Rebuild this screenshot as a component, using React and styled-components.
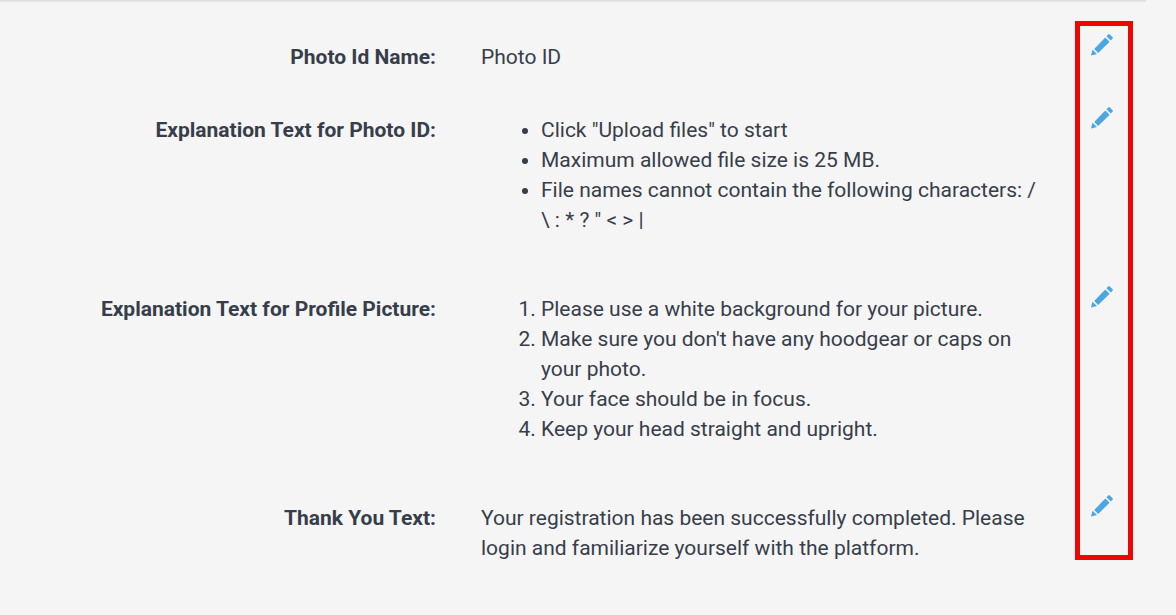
import React from 'react';
import styled, { createGlobalStyle } from 'styled-components';

const GlobalStyle = createGlobalStyle`
  body {
    margin: 0;
    background: #f5f5f5;
    color: #373e4a;
    font-family: Roboto, 'Liberation Sans', sans-serif;
    font-size: 21px;
    line-height: 30px;
  }
`;

const Page = styled.main`
  padding-right: 30px;
`;

const Divider = styled.div`
  height: 1px;
  background: #dcdcdc;
  box-shadow: 0 1px 1px #e8e8e8;
`;

const Settings = styled.div`
  position: relative;
  padding-top: 26px;
`;

const Row = styled.div`
  display: grid;
  grid-template-columns: 436fr 609fr 101px;
  padding-bottom: 28px;
`;

const Label = styled.div`
  padding-top: 15px;
  font-weight: 700;
  text-align: right;
`;

const Value = styled.div`
  padding: 15px 0 0 45px;

  p {
    margin: 0;
  }

  ul,
  ol {
    margin: 0 0 16px;
    padding-left: 60px;
  }
`;

const EditButton = styled.button`
  justify-self: start;
  align-self: start;
  display: flex;
  margin-left: 39px;
  padding: 7px;
  border: none;
  background: none;
  color: #4ba6e2;
  cursor: pointer;
`;

const Highlight = styled.div`
  position: absolute;
  top: 20px;
  right: 13px;
  bottom: 31px;
  width: 48px;
  border: 5px solid #ec0606;
  pointer-events: none;
`;

const Pencil = () => (
  <svg width="22" height="22" viewBox="0 0 22 22" fill="currentColor" aria-hidden="true">
    <path d="M0 21.5L1.4 15.8l4.6 4.3z" />
    <path d="M3.2 15L13.8 4q.5-.4 1 0l3.3 3.3q.4.4 0 .9L7.2 18.9z" />
    <path d="M15.4 2.2L17.3.4q.8-.7 1.5 0l2.8 2.8q.6.7 0 1.4l-1.8 1.9z" />
  </svg>
);

const SettingRow = ({ label, children }) => (
  <Row>
    <Label>{label}:</Label>
    <Value>{children}</Value>
    <EditButton type="button" aria-label={`Edit ${label}`}>
      <Pencil />
    </EditButton>
  </Row>
);

const App = () => {
  return (
    <>
      <GlobalStyle />
      <Page>
        <Divider />
        <Settings>
          <SettingRow label="Photo Id Name">
            <p>Photo ID</p>
          </SettingRow>
          <SettingRow label="Explanation Text for Photo ID">
            <ul>
              <li>Click "Upload files" to start</li>
              <li>Maximum allowed file size is 25 MB.</li>
              <li>{'File names cannot contain the following characters: / \\ : * ? " < > |'}</li>
            </ul>
          </SettingRow>
          <SettingRow label="Explanation Text for Profile Picture">
            <ol>
              <li>Please use a white background for your picture.</li>
              <li>Make sure you don't have any hoodgear or caps on your photo.</li>
              <li>Your face should be in focus.</li>
              <li>Keep your head straight and upright.</li>
            </ol>
          </SettingRow>
          <SettingRow label="Thank You Text">
            <p>Your registration has been successfully completed. Please login and familiarize yourself with the platform.</p>
          </SettingRow>
          <Highlight />
        </Settings>
      </Page>
    </>
  );
};

export default App;
